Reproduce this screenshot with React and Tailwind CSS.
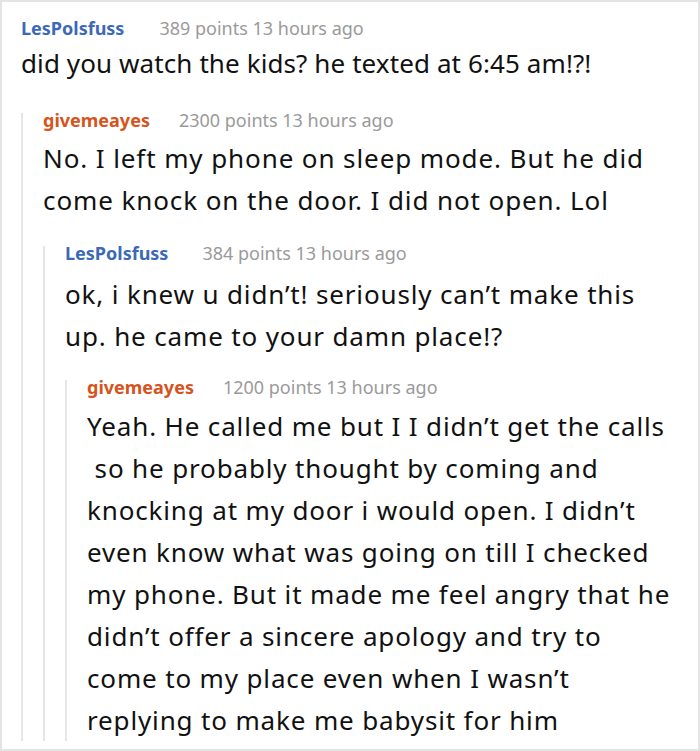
const thread = [
  {
    author: 'LesPolsfuss',
    blue: true,
    points: 389,
    gap: 'gap-[35px]',
    top: '',
    bodyTop: 'mt-[7px] tracking-[0.1px]',
    lines: ['did you watch the kids? he texted at 6:45 am!?!'],
  },
  {
    author: 'givemeayes',
    points: 2300,
    gap: 'gap-[29px]',
    top: 'mt-[29px]',
    bodyTop: 'mt-[10px] tracking-[0.9px]',
    lines: ['No. I left my phone on sleep mode. But he did', 'come knock on the door. I did not open. Lol'],
  },
  {
    author: 'LesPolsfuss',
    blue: true,
    points: 384,
    gap: 'gap-[34px]',
    top: 'mt-[25px]',
    bodyTop: 'mt-[13px] tracking-[0.85px]',
    lines: ['ok, i knew u didn’t! seriously can’t make this', 'up. he came to your damn place!?'],
  },
  {
    author: 'givemeayes',
    points: 1200,
    gap: 'gap-[29px]',
    top: 'mt-[23px]',
    bodyTop: 'mt-[11px] mb-[-10px] tracking-[0.85px]',
    lines: [
      'Yeah. He called me but I I didn’t get the calls',
      ' so he probably thought by coming and',
      'knocking at my door i would open. I didn’t',
      'even know what was going on till I checked',
      'my phone. But it made me feel angry that he',
      'didn’t offer a sincere apology and try to',
      'come to my place even when I wasn’t',
      'replying to make me babysit for him',
    ],
  },
];

function Comment({ depth }) {
  const c = thread[depth];
  if (!c) return null;
  return (
    <div className={depth > 0 ? `border-l-2 border-[#e6e6e6] pl-[20px] ${c.top}` : ''}>
      <div className={`flex items-center ${c.gap} text-[18px] leading-[14px]`}>
        <span className={`font-bold ${c.blue ? 'text-[#3b69b8]' : 'text-[#d6541c]'}`}>{c.author}</span>
        <span className="text-[#9a9a9a]">{c.points} points 13 hours ago</span>
      </div>
      <p className={`${c.bodyTop} text-[26px] leading-[42px] text-[#111] whitespace-pre`}>
        {c.lines.join('\n')}
      </p>
      <Comment depth={depth + 1} />
    </div>
  );
}

export default function App() {
  return (
    <div className="w-[700px] h-[751px] bg-white border-2 border-[#e4e4e4] pl-[19px] pr-[10px] pt-[19px] font-['Noto_Sans',sans-serif] overflow-hidden">
      <Comment depth={0} />
    </div>
  );
}
